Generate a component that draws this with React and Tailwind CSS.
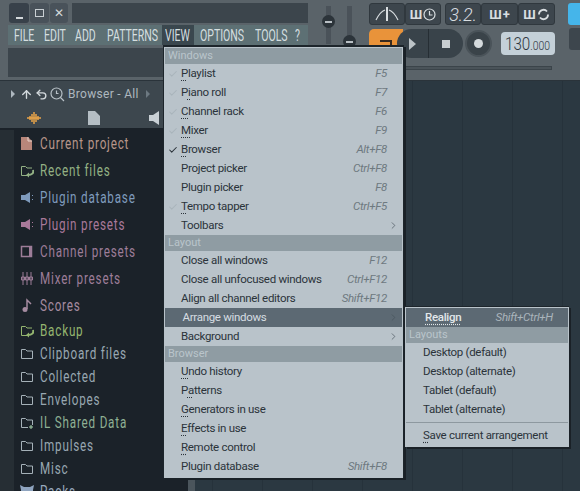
import { ArrowUp, Check, ChevronRight, Undo2 } from "lucide-react";

const menuFont = { fontFamily: 'Roboto, "Noto Sans", sans-serif' };
const narrowFont = { fontFamily: 'Roboto, "Liberation Sans", sans-serif' };

// label text is split as [before, underlined letter, after]
const viewMenu = [
    { header: "Windows" },
    { key: ["", "P", "laylist"], short: "F5", faded: true },
    { key: ["P", "i", "ano roll"], short: "F7", faded: true },
    { key: ["", "C", "hannel rack"], short: "F6", faded: true },
    { key: ["", "M", "ixer"], short: "F9", faded: true },
    { key: ["", "B", "rowser"], short: "Alt+F8", checked: true },
    { key: ["Project picker"], short: "Ctrl+F8" },
    { key: ["Plugin picker"], short: "F8" },
    { key: ["", "T", "empo tapper"], short: "Ctrl+F5", faded: true },
    { key: ["Toolbars"], sub: true },
    { header: "Layout" },
    { key: ["Close all windows"], short: "F12" },
    { key: ["Close all unfocused windows"], short: "Ctrl+F12" },
    { key: ["Align all channel editors"], short: "Shift+F12" },
    { key: ["Arrange windows"], sub: true, active: true },
    { key: ["Background"], sub: true },
    { header: "Browser" },
    { key: ["", "U", "ndo history"] },
    { key: ["P", "a", "tterns"] },
    { key: ["", "G", "enerators in use"] },
    { key: ["", "E", "ffects in use"] },
    { key: ["", "R", "emote control"] },
    { key: ["Plugin database"], short: "Shift+F8" },
];

const topMenu = [
    { label: "FILE", className: "w-[21px] ml-[6px]" },
    { label: "EDIT", className: "w-[22px] ml-[9px]" },
    { label: "ADD", className: "w-[22px] ml-[9px]" },
    { label: "PATTERNS", className: "w-[49px] ml-[10px]" },
    { label: "VIEW", className: "w-[32px] ml-[6px] pl-[3px] bg-[#3a474e]" },
    { label: "OPTIONS", className: "w-[46px] ml-[6px]" },
    { label: "TOOLS", className: "w-[33px] ml-[9px]" },
    { label: "?", className: "w-[6px] ml-[7px]" },
];

const browserItems = [
    { label: "Current project", color: "text-[#b7968a]", icon: "doc", tall: true },
    { label: "Recent files", color: "text-[#93b184]", icon: "recent", tall: true },
    { label: "Plugin database", color: "text-[#7f9bbd]", icon: "plug", tall: true },
    { label: "Plugin presets", color: "text-[#a9799a]", icon: "plug", tall: true },
    { label: "Channel presets", color: "text-[#9d7d98]", icon: "channel", tall: true },
    { label: "Mixer presets", color: "text-[#9d7d98]", icon: "mixer", tall: true },
    { label: "Scores", color: "text-[#a58ba0]", icon: "note", tall: true },
    { label: "Backup", color: "text-[#94b56f]", icon: "recent" },
    { label: "Clipboard files", color: "text-[#98a7b1]", icon: "folder" },
    { label: "Collected", color: "text-[#98a7b1]", icon: "folder" },
    { label: "Envelopes", color: "text-[#98a7b1]", icon: "folder" },
    { label: "IL Shared Data", color: "text-[#8eb094]", icon: "shared" },
    { label: "Impulses", color: "text-[#98a7b1]", icon: "folder" },
    { label: "Misc", color: "text-[#98a7b1]", icon: "folder" },
    { label: "Packs", color: "text-[#98a9bf]", icon: "packs" },
];

function BrowserIcon({ type }) {
    const folder = "M1.5 3.5h4l1.5 1.5h5.5v7.5h-11z";
    return (
        <svg width="14" height="15" viewBox="0 0 14 15" fill="none" stroke="currentColor" strokeWidth="1" className="shrink-0">
            {type === "doc" && <path d="M1 1h7l4 4v9H1z" fill="#b7867a" stroke="none" />}
            {type === "doc" && <path d="M8 1v4h4" stroke="#e6d2ca" />}
            {type === "folder" && <path d={folder} stroke="#a5b1b8" />}
            {type === "recent" && (
                <>
                    <path d="M7 12.5H1.5v-9h4L7 5h5" />
                    <path d="M13 7c1 3-1 5-5 5" strokeWidth="2" />
                    <path d="M9 9.5l-3 2.5 3 2.5z" fill="currentColor" stroke="none" />
                </>
            )}
            {type === "shared" && (
                <>
                    <path d="M8 12.5H1.5v-9h4L7 5h5.5v5" stroke="#a5b1b8" />
                    <path d="M11 10v4M9 12h4" stroke="#a7d0ac" />
                </>
            )}
            {type === "plug" && (
                <>
                    <path d="M1 5h4l5-3v11L5 10H1z" fill="currentColor" stroke="none" />
                    <path d="M12.5 5v1M12.5 9v1" stroke="currentColor" />
                </>
            )}
            {type === "channel" && (
                <>
                    <rect x="1.5" y="2.5" width="10" height="10" strokeWidth="1.5" />
                    <rect x="9" y="3" width="3" height="9" fill="currentColor" stroke="none" />
                </>
            )}
            {type === "mixer" && (
                <path d="M3 1v13M7 1v13M11 1v13M1.5 6h3v3h-3zM5.5 6h3v3h-3zM9.5 6h3v3h-3z" fill="#1b2229" />
            )}
            {type === "note" && (
                <>
                    <circle cx="5" cy="11.5" r="2.5" fill="currentColor" stroke="none" />
                    <path d="M7 11V2l4 4" strokeWidth="1.5" />
                </>
            )}
            {type === "packs" && <path d="M0 1l4 2h6l4-2-1 5v8H1V6z" fill="#8fa4bf" stroke="none" />}
        </svg>
    );
}

function MenuHeader({ children }) {
    return (
        <div className="h-4 leading-4 px-[3px] bg-[#8f9ca3] text-[#bac5cb] text-[11px]">{children}</div>
    );
}

function MenuLabel({ parts }) {
    if (parts.length === 1) return <span>{parts[0]}</span>;
    return (
        <span>
            {parts[0]}
            <span className="underline decoration-dotted underline-offset-[3px]">{parts[1]}</span>
            {parts[2]}
        </span>
    );
}

function MenuRow({ item }) {
    const bg = item.active ? "bg-[#5c6973] text-[#d6dde2]" : "text-[#2b333a]";
    return (
        <div className={`flex items-center h-[19px] text-[11.5px] tracking-[-0.3px] ${bg}`}>
            <span className="w-4 flex justify-center shrink-0">
                {(item.checked || item.faded) && (
                    <Check size={10} strokeWidth={2.5} className={item.checked ? "text-[#2b333a]" : "text-[#a9b4bb]"} />
                )}
            </span>
            <span className={`${item.active ? "ml-[1.5px]" : ""} flex-1`}>
                <MenuLabel parts={item.key} />
            </span>
            {item.short && <span className="italic text-[#6e7980] pr-[15px]">{item.short}</span>}
            {item.sub && <ChevronRight size={11} strokeWidth={1.5} className="mr-[3px] text-[#46525b]" />}
        </div>
    );
}

function TopButton({ children, className = "" }) {
    return (
        <div className={`h-[22px] rounded-[3px] bg-[#3d464d] border border-[#30383e] flex items-center justify-center text-[#d9dee1] ${className}`}>
            {children}
        </div>
    );
}

function TopBar() {
    return (
        <div className="h-[81px] shrink-0 bg-[#5a6369] border-b border-[#2a333a] flex">
            {/* window controls, title, menu bar and hint panel */}
            <div className="w-[308px] shrink-0 pl-[9px] pt-[3px]">
                <div className="flex h-[20px] gap-[1px]">
                    <div className="w-[20px] rounded-[3px] bg-[#38414a] flex items-end justify-center pb-[4px]">
                        <span className="w-[7px] h-[2px] bg-[#d3d8db]" />
                    </div>
                    <div className="w-[19px] rounded-[3px] bg-[#49525a] flex items-center justify-center">
                        <span className="w-[9px] h-[8px] border border-[#c9cfd3]" />
                    </div>
                    <div className="w-[18px] rounded-[3px] bg-[#49525a] flex items-center justify-center text-[#d3d8db] text-[12px]">✕</div>
                    <div className="flex-1 ml-[3px] bg-[#3c454c]" />
                </div>
                <div className="mt-[2px] -ml-[1px] h-[20px] w-[300px] bg-[#5d7074] flex text-[#d5dfe0] text-[17px] leading-[21px]" style={narrowFont}>
                    {topMenu.map((m) => (
                        <span key={m.label} className={`${m.className} h-full shrink-0 whitespace-nowrap`}>
                            <span className="inline-block origin-left scale-x-[0.62]">{m.label}</span>
                        </span>
                    ))}
                </div>
                <div className="mt-[3px] -ml-[1px] h-[29px] w-[292px] bg-[#3c454c]" />
            </div>
            {/* master sliders */}
            <div className="w-[54px] shrink-0 flex justify-center gap-[16px] pt-[6px] pl-[8px]">
                <div className="relative w-[5px] h-[38px] bg-[#4a5259]">
                    <span className="absolute top-[9px] -left-[4px] w-[13px] h-[13px] rounded-full bg-[#2c343a] flex items-center justify-center">
                        <span className="w-[7px] h-[2px] bg-[#b9c0c5]" />
                    </span>
                </div>
                <div className="relative w-[5px] h-[38px] bg-[#4a5259]">
                    <span className="absolute top-[29px] -left-[4px] w-[13px] h-[13px] rounded-full bg-[#2c343a] flex items-center justify-center">
                        <span className="w-[7px] h-[2px] bg-[#b9c0c5]" />
                    </span>
                </div>
            </div>
            {/* transport and tool buttons */}
            <div className="flex-1 pl-[7px] pt-[3px]">
                <div className="flex items-start">
                    <TopButton className="w-[36px]">
                        <svg width="26" height="16" viewBox="0 0 26 16" fill="none" stroke="currentColor" strokeWidth="1.2">
                            <path d="M2 14C5 8 8 5 11 4M24 14C21 8 18 5 15 4" />
                            <path d="M13 1v14" strokeWidth="2" />
                        </svg>
                    </TopButton>
                    <TopButton className="w-[36px] gap-[1px]">
                        <span className="text-[13px] font-bold leading-none">Ш</span>
                        <svg width="13" height="13" viewBox="0 0 13 13" fill="none" stroke="currentColor" strokeWidth="1.2">
                            <circle cx="6.5" cy="6.5" r="5.5" />
                            <path d="M6.5 3v4h3" />
                        </svg>
                    </TopButton>
                    <TopButton className="w-[36px] ml-[4px] text-[18px] italic font-light" >3.2.</TopButton>
                    <TopButton className="w-[37px] gap-[1px]">
                        <span className="text-[13px] font-bold leading-none">Ш</span>
                        <span className="text-[13px] font-bold leading-none">+</span>
                    </TopButton>
                    <TopButton className="w-[37px] gap-[1px]">
                        <span className="text-[13px] font-bold leading-none">Ш</span>
                        <svg width="13" height="13" viewBox="0 0 13 13" fill="none" stroke="currentColor" strokeWidth="1.8">
                            <path d="M11 6.5a4.5 4.5 0 0 1-8 3M2 6.5a4.5 4.5 0 0 1 8-3" />
                        </svg>
                    </TopButton>
                    <div className="ml-[13px] w-[12px] h-[22px] bg-[#45b5ea] rounded-l-[3px]" />
                </div>
                <div className="flex items-start mt-[4px]">
                    <div className="w-[34px] h-[29px] bg-[#e9933a] rounded-l-[5px] flex items-center justify-center">
                        <span className="w-[12px] h-[8px] border-t-2 border-r-2 border-[#3a2b1e]" />
                    </div>
                    <div className="-ml-[6px] w-[66px] h-[29px] rounded-full bg-[#39434a] flex overflow-hidden">
                        <div className="w-[32px] flex items-center justify-center border-r border-[#262e34]">
                            <span className="w-0 h-0 border-y-[6px] border-y-transparent border-l-[7px] border-l-[#bcc3c7]" />
                        </div>
                        <div className="flex-1 flex items-center justify-center">
                            <span className="w-[8px] h-[8px] bg-[#c8ced1]" />
                        </div>
                    </div>
                    <div className="ml-[2px] mt-px w-[27px] h-[27px] rounded-full bg-[#3a4349] border-2 border-[#4a5359] flex items-center justify-center">
                        <span className="w-[9px] h-[9px] rounded-full bg-[#d5dadd]" />
                    </div>
                    <div className="ml-[9px] mt-[3px] w-[54px] h-[23px] rounded-[4px] bg-[#c4d0d8] text-[#2e373e] pl-[4px] text-[19px] leading-[23px] font-light whitespace-nowrap" style={narrowFont}>
                        <span className="inline-block origin-left scale-x-[0.8]">
                            130<span className="text-[13px]">.000</span>
                        </span>
                    </div>
                    <div className="ml-[14px] -mt-px w-[12px] h-[22px] bg-[#3d464d] rounded-l-[3px]" />
                </div>
                <div className="mt-[8px] ml-[-2px] w-[185px] h-[4px] bg-[#4a5359] border border-[#3b444a]" />
            </div>
        </div>
    );
}

function Browser() {
    return (
        <div className="w-[188px] shrink-0 bg-[#1b2229] flex flex-col overflow-hidden">
            <div className="h-[47px] shrink-0 bg-[#3d474e] text-[#aeb8bf]">
                <div className="h-[26px] flex items-center pl-[11px] text-[12px] tracking-[0.3px]" style={menuFont}>
                    <span className="w-0 h-0 border-y-[4px] border-y-transparent border-l-[4px] border-l-[#aeb8bf]" />
                    <ArrowUp size={13} strokeWidth={2.5} className="ml-[5px] text-[#d4dade]" />
                    <Undo2 size={13} strokeWidth={2.5} className="ml-[2px] text-[#d4dade]" />
                    <svg width="15" height="15" viewBox="0 0 15 15" fill="none" stroke="#b9c2c8" strokeWidth="1.2" className="ml-[2px]">
                        <circle cx="6.5" cy="6.5" r="5.5" />
                        <path d="M6.5 3.5v3h2M10.5 10.5l3.500 3.500" />
                    </svg>
                    <span className="ml-[3px]">Browser - All</span>
                    <span className="ml-[7px] w-0 h-0 border-y-[4px] border-y-transparent border-l-[4px] border-l-[#6d7981]" />
                </div>
                <div className="flex items-center h-[21px] pl-[26px]">
                    <svg width="16" height="12" viewBox="0 0 16 12" stroke="#e8a44a" strokeWidth="1.5">
                        <path d="M1 6h14M4 4v4M6 2v8M8 0v12M10 2v8M12 4v4" />
                    </svg>
                    <svg width="12" height="14" viewBox="0 0 12 14" fill="#b5bec4" className="ml-[46px]">
                        <path d="M0 0h7l5 5v9H0z" />
                    </svg>
                    <svg width="14" height="14" viewBox="0 0 14 14" fill="#c9d0d5" className="ml-[49px]">
                        <path d="M0 4h4l6-4v14L4 10H0z" />
                    </svg>
                </div>
            </div>
            <div className="flex-1 flex pt-[2px] overflow-hidden">
                <div className="w-[14px] shrink-0 bg-[#262e34]" />
                <div className="flex-1 pl-[6px]">
                    {browserItems.map((item) => (
                        <div key={item.label} className={`flex items-center gap-[6px] ${item.tall ? "h-[27px]" : "h-[23px]"} ${item.color}`}>
                            <BrowserIcon type={item.icon} />
                            <span className="inline-block origin-left scale-x-[0.73] text-[16px] tracking-[1.1px] whitespace-nowrap" style={narrowFont}>
                                {item.label}
                            </span>
                        </div>
                    ))}
                </div>
            </div>
        </div>
    );
}

export default function App() {
    return (
        <div className="relative w-[580px] h-[491px] overflow-hidden flex flex-col bg-[#2b3841]" style={menuFont}>
            <TopBar />
            <div className="flex-1 flex min-h-0">
                <Browser />
                <div className="w-[7px] bg-[#4b555c]" />
                <div className="flex-1 bg-[#2b3841] bg-[linear-gradient(to_right,#26323b_1px,transparent_1px)] bg-[size:50px_100%] bg-[position:17px_0]" />
            </div>

            {/* VIEW dropdown */}
            <div className="absolute left-[163px] top-[45px] w-[241px] h-[433px] bg-[#b9c3ca] border-t-[2px] border-x border-[#1d252b] shadow-[2px_2px_0_#1a2127] p-[1px]">
                {viewMenu.map((item, i) =>
                    item.header ? (
                        <MenuHeader key={i}>{item.header}</MenuHeader>
                    ) : (
                        <MenuRow key={i} item={item} />
                    )
                )}
            </div>

            {/* Arrange windows submenu */}
            <div className="absolute left-[405px] top-[306px] w-[164px] h-[141px] bg-[#b9c3ca] border-t border-[#1d252b] shadow-[2px_2px_0_#1a2127] pt-[1px] px-[1px] text-[11.5px] tracking-[-0.3px]">
                <div className="h-[19px] flex items-center justify-between bg-[#5c6973] pl-[19px] pr-[15px]">
                    <span className="text-[#e2e7ea] underline decoration-dotted underline-offset-[3px] font-medium">Realign</span>
                    <span className="italic text-[#aab4bb]">Shift+Ctrl+H</span>
                </div>
                <div className="h-4 leading-4 px-[3px] bg-[#8f9ca3] text-[#bac5cb] text-[11px] tracking-normal">Layouts</div>
                <div className="text-[#2b333a] pl-[17px]">
                    <div className="h-[19px] leading-[18px]">Desktop (default)</div>
                    <div className="h-[19px] leading-[18px]">Desktop (alternate)</div>
                    <div className="h-[19px] leading-[18px]">Tablet (default)</div>
                    <div className="h-[19px] leading-[18px]">Tablet (alternate)</div>
                </div>
                <div className="mt-[3px] mb-[3px] border-t border-[#8d989f]" />
                <div className="h-[19px] leading-[18px] pl-[17px] text-[#2b333a]">
                    <span className="underline decoration-dotted underline-offset-[3px]">S</span>ave current arrangement
                </div>
            </div>
        </div>
    );
}
